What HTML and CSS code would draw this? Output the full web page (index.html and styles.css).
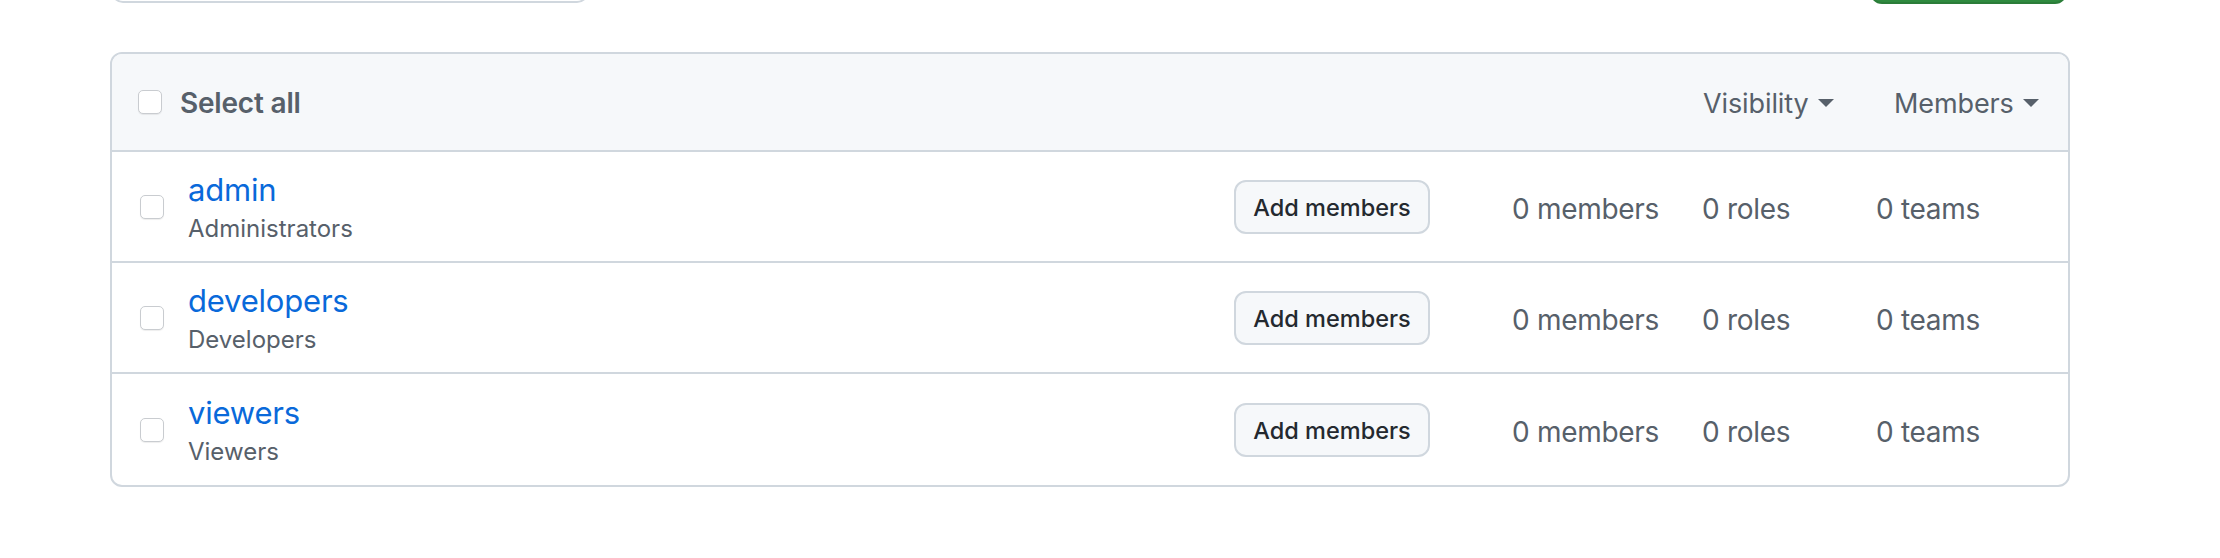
FILE: index.html
```html
<!DOCTYPE html>
<html lang="en">
<head>
<meta charset="utf-8">
<title>Teams</title>
<link rel="stylesheet" href="styles.css">
</head>
<body>
<div class="page">
  <div class="toolbar">
    <div class="search"></div>
    <div class="new-btn"></div>
  </div>
  <div class="box">
    <div class="box-header">
      <label class="select-all"><span class="checkbox"></span><span class="select-label">Select all</span></label>
      <div class="sort sort-visibility"><span>Visibility</span><span class="caret"></span></div>
      <div class="sort sort-members"><span>Members</span><span class="caret"></span></div>
    </div>
    <ul class="rows">
      <li class="row">
        <span class="checkbox"></span>
        <div class="team-info">
          <a class="team-name" href="#">admin</a>
          <div class="team-desc">Administrators</div>
        </div>
        <button class="btn">Add members</button>
        <span class="stat stat-members">0 members</span>
        <span class="stat stat-roles">0 roles</span>
        <span class="stat stat-teams">0 teams</span>
      </li>
      <li class="row">
        <span class="checkbox"></span>
        <div class="team-info">
          <a class="team-name" href="#">developers</a>
          <div class="team-desc">Developers</div>
        </div>
        <button class="btn">Add members</button>
        <span class="stat stat-members">0 members</span>
        <span class="stat stat-roles">0 roles</span>
        <span class="stat stat-teams">0 teams</span>
      </li>
      <li class="row">
        <span class="checkbox"></span>
        <div class="team-info">
          <a class="team-name" href="#">viewers</a>
          <div class="team-desc">Viewers</div>
        </div>
        <button class="btn">Add members</button>
        <span class="stat stat-members">0 members</span>
        <span class="stat stat-roles">0 roles</span>
        <span class="stat stat-teams">0 teams</span>
      </li>
    </ul>
  </div>
</div>
</body>
</html>
```
FILE: styles.css
```css
* { box-sizing: border-box; }
html, body { margin: 0; padding: 0; background: #ffffff; }
body {
  font-family: Inter, "Liberation Sans", Arial, sans-serif;
  color: #24292f;
  width: 2220px;
  height: 558px;
  overflow: hidden;
}
.page {
  padding-left: 110px;
  width: 2070px;
}
.toolbar {
  display: flex;
  justify-content: space-between;
  align-items: flex-end;
  margin-top: -60px;
  height: 64px;
}
.search {
  width: 478px;
  height: 63px;
  margin-left: 1px;
  margin-bottom: 1px;
  border: 2px solid #d0d7de;
  border-radius: 12px;
  background: #ffffff;
}
.new-btn {
  width: 197px;
  height: 64px;
  margin-right: 3px;
  border-radius: 12px;
  background: #2f8a3f;
  border: 2px solid #2b7d39;
}
.box {
  margin-top: 48px;
  width: 1960px;
  border: 2px solid #d0d7de;
  border-radius: 12px;
  overflow: hidden;
}
.box-header {
  display: flex;
  align-items: center;
  height: 98px;
  padding-left: 26px;
  background: #f6f8fa;
  border-bottom: 2px solid #d0d7de;
  color: #57606a;
}
.checkbox {
  flex: none;
  display: inline-block;
  width: 24px;
  height: 24px;
  border: 1.5px solid #c9ccd0;
  border-radius: 5px;
  background: #ffffff;
  box-shadow: 0 1px 1px rgba(0, 0, 0, 0.07);
}
.select-all {
  flex: 1;
  display: flex;
  align-items: center;
}
.select-label {
  margin-left: 18px;
  padding-top: 2px;
  font-size: 28px;
  font-weight: 600;
  letter-spacing: -0.2px;
}
.sort {
  display: flex;
  align-items: center;
  font-size: 27px;
  letter-spacing: -0.1px;
  padding-top: 2px;
}
.sort-visibility { width: 191px; }
.sort-members { width: 174px; }
.caret {
  margin-left: 9px;
  width: 0;
  height: 0;
  border-top: 8px solid #57606a;
  border-left: 8px solid transparent;
  border-right: 8px solid transparent;
}
.rows {
  list-style: none;
  margin: 0;
  padding: 0;
}
.row {
  display: flex;
  align-items: center;
  height: 111px;
  padding-left: 28px;
  border-bottom: 2px solid #d0d7de;
}
.row:last-child { border-bottom: none; height: 111px; }
.team-info {
  flex: 1;
  margin-left: 24px;
  display: flex;
  flex-direction: column;
  padding-top: 3px;
}
.team-name {
  color: #0969da;
  text-decoration: none;
  font-size: 31px;
  line-height: 38px;
  letter-spacing: -0.2px;
}
.team-desc {
  color: #57606a;
  font-size: 24px;
  line-height: 34px;
  margin-top: 3px;
}
.btn {
  flex: none;
  width: 196px;
  height: 54px;
  margin-right: 82px;
  padding: 2px 0 0;
  font-family: inherit;
  font-size: 23.5px;
  font-weight: 500;
  color: #24292f;
  background: #f6f8fa;
  border: 2px solid #d0d7de;
  border-radius: 12px;
}
.stat {
  flex: none;
  color: #57606a;
  font-size: 28px;
  letter-spacing: -0.3px;
  padding-top: 4px;
}
.stat-members { width: 190px; }
.stat-roles { width: 174px; }
.stat-teams { width: 192px; }
```
